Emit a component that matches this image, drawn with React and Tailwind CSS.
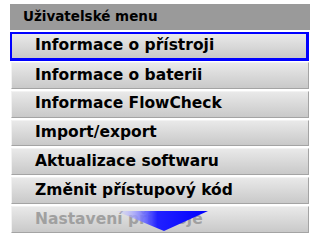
import React from 'react';

const items = [
  { label: 'Informace o přístroji', active: true },
  { label: 'Informace o baterii' },
  { label: 'Informace FlowCheck' },
  { label: 'Import/export' },
  { label: 'Aktualizace softwaru' },
  { label: 'Změnit přístupový kód' },
  { label: 'Nastavení přístroje', disabled: true },
];

function MoreArrow() {
  return (
    <svg className="absolute left-[104px] top-[4px]" width="92" height="21" viewBox="0 0 92 21">
      <defs>
        <linearGradient id="arrowFill" x1="0" y1="0" x2="1" y2="0">
          <stop offset="0" stopColor="#d0d0ff" stopOpacity="0.2" />
          <stop offset="0.2" stopColor="#a0a0ff" stopOpacity="0.8" />
          <stop offset="0.45" stopColor="#2020ff" />
          <stop offset="1" stopColor="#0000ff" />
        </linearGradient>
      </defs>
      <polygon points="0,0 92,0 48,20" fill="url(#arrowFill)" />
    </svg>
  );
}

export default function App() {
  return (
    <div className="w-[320px] h-[240px] bg-white font-['DejaVu_Sans',Verdana,sans-serif] pt-[4px] pl-[10px]">
      <div className="w-[300px] h-[26px] bg-[#9a9a9a] flex items-center pl-[13px]">
        <span className="text-[13.5px] font-bold text-black leading-none">Uživatelské menu</span>
      </div>

      <div className="flex flex-col gap-[2px] mt-[3px] pl-px w-[299px]">
        {items.map((item) => (
          <div
            key={item.label}
            className={`relative flex items-center pl-[23px] bg-gradient-to-b from-[#e9e9e9] to-[#c9c9c9] border ${
              item.active
                ? 'border-[#0000ff] border-2 border-r-[3px] border-b-[3px] -ml-px -mt-px h-[29px] -mb-px'
                : 'h-[26.8px] border-t-[#f2f2f2] border-l-[#f2f2f2] border-r-[#a4a4a4] border-b-[#a4a4a4]'
            }`}
          >
            <span
              className={`text-[15.5px] font-bold leading-none ${
                item.disabled ? 'text-[#a0a0a0]' : 'text-black'
              }`}
            >
              {item.label}
            </span>
            {item.disabled && <MoreArrow />}
          </div>
        ))}
      </div>
    </div>
  );
}
